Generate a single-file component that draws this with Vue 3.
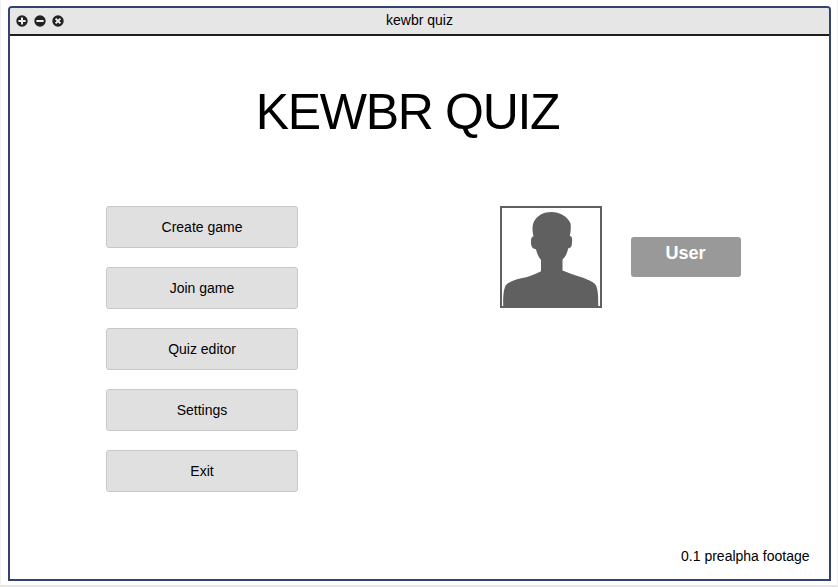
<script setup>
const menu = ['Create game', 'Join game', 'Quiz editor', 'Settings', 'Exit']
</script>

<template>
  <div class="page">
    <div class="window">
      <header class="titlebar">
        <div class="controls">
          <svg viewBox="0 0 12 12"><circle cx="6" cy="6" r="5.7" /><path d="M6 2.4v7.2M2.4 6h7.2" /></svg>
          <svg viewBox="0 0 12 12"><circle cx="6" cy="6" r="5.7" /><path d="M2.4 6h7.2" /></svg>
          <svg viewBox="0 0 12 12"><circle cx="6" cy="6" r="5.7" /><path d="M3.600 3.600l4.800 4.800M8.400 3.600l-4.800 4.800" /></svg>
        </div>
        <span class="caption">kewbr quiz</span>
        <div class="spacer"></div>
      </header>
      <main class="content">
        <h1>KEWBR QUIZ</h1>
        <div class="columns">
          <nav class="menu">
            <button v-for="item in menu" :key="item" type="button">{{ item }}</button>
          </nav>
          <section class="profile">
            <div class="avatar">
              <svg viewBox="0 0 98 98">
                <path d="M1.2 98C1 88 1.800 80 4 77C6 74.500 11 72.500 18 70.600C27 68.800 34 66 39 63.200V52C36.500 49 34.700 45 34 41.300C31 41.200 29.300 39 29 35.500C28.800 31 29.300 29 31.500 28.300C30.200 23 30 17.500 32 13.500C35.500 7 42 4 49.500 4C57.500 4 65 8 68.600 15.500C69.100 20 68.500 25 67.800 28C70 28.200 70.400 30 70 34.500C69.800 38.500 69 40 66.200 40.300C65.300 45 63.500 49 60.500 51.500V62.500C66 65 74 67.300 81 69.800C88 72.500 92 74.300 94 77.500C96 82 96.300 88 96.300 98Z" />
              </svg>
            </div>
            <button class="user" type="button">User</button>
          </section>
        </div>
        <footer>0.1 prealpha footage</footer>
      </main>
    </div>
  </div>
</template>

<style>
body {
  margin: 0;
}
</style>

<style scoped>
.page {
  box-sizing: border-box;
  width: 838px;
  height: 587px;
  padding: 6px 6px 4px 7px;
  border: solid #f1f1f1;
  border-width: 0 1px 2px 1px;
  border-bottom-color: #e6e6e6;
  background: #fff;
  font-family: "Liberation Sans", Arial, sans-serif;
  font-size: 14px;
  color: #000;
}
.window {
  box-sizing: border-box;
  display: flex;
  flex-direction: column;
  width: 823px;
  height: 575px;
  border: 2px solid #33436e;
  border-radius: 4px 4px 0 0;
  background: #fff;
}
.titlebar {
  box-sizing: border-box;
  display: grid;
  grid-template-columns: 1fr auto 1fr;
  align-items: center;
  height: 28px;
  padding: 0 6.400px;
  border-bottom: 2px solid #1e1e1e;
  border-radius: 2px 2px 0 0;
  background: #e6e6e6;
}
.controls {
  display: flex;
  gap: 6px;
  margin-bottom: 1px;
}
.controls svg {
  width: 12px;
  height: 12px;
}
.controls circle {
  fill: #222;
}
.controls path {
  fill: none;
  stroke: #eee;
  stroke-width: 2;
}
.caption {
  line-height: 24px;
  margin-bottom: 2px;
}
.content {
  display: flex;
  flex: 1;
  flex-direction: column;
}
h1 {
  margin: 48px 24px 0 0;
  font-size: 50px;
  line-height: 56px;
  font-weight: 400;
  letter-spacing: -1.3px;
  text-align: center;
}
.columns {
  display: flex;
  justify-content: space-between;
  margin: 66px 88px 0 96px;
}
.menu {
  display: flex;
  flex-direction: column;
  gap: 19px;
}
.menu button {
  width: 192px;
  height: 42px;
  padding: 0;
  border: 1px solid #c8c8c8;
  border-radius: 3px;
  background: #e0e0e0;
  font: inherit;
  color: inherit;
}
.profile {
  display: flex;
  align-items: flex-start;
  gap: 29px;
}
.avatar {
  width: 98px;
  height: 98px;
  border: 2px solid #606060;
}
.avatar svg {
  display: block;
  fill: #606060;
}
.user {
  display: flex;
  justify-content: center;
  width: 110px;
  height: 40px;
  margin-top: 31px;
  padding: 6px 1px 0 0;
  border: 0;
  border-radius: 3px;
  background: #999;
  color: #fff;
  font: bold 18px/20px "Liberation Sans", Arial, sans-serif;
}
footer {
  margin: auto 19.500px 15px auto;
  line-height: 16px;
}
</style>
